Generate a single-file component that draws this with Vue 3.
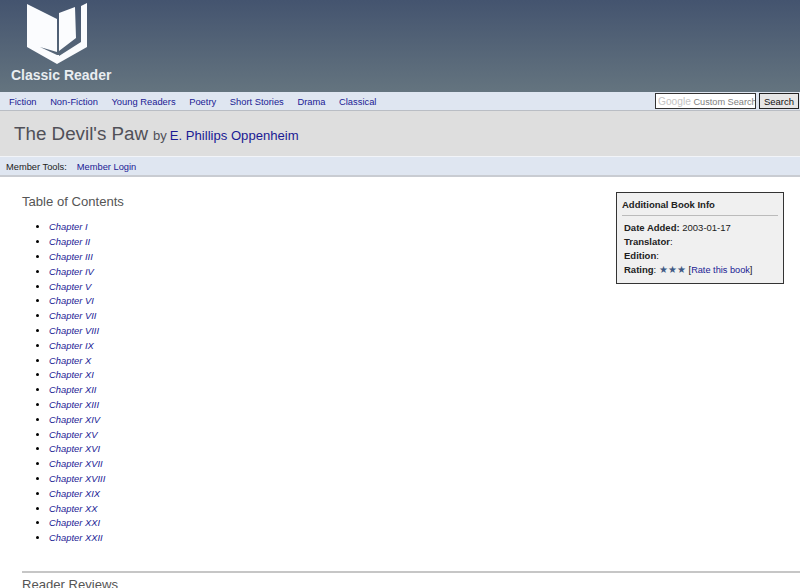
<script setup>
const numerals = ['I','II','III','IV','V','VI','VII','VIII','IX','X','XI','XII','XIII','XIV','XV','XVI','XVII','XVIII','XIX','XX','XXI','XXII']
const chapters = numerals.map(n => 'Chapter ' + n)
const navItems = ['Fiction','Non-Fiction','Young Readers','Poetry','Short Stories','Drama','Classical']
</script>

<template>
  <div class="page">
    <header class="banner">
      <div class="logo">
        <svg class="logo-mark" width="62" height="64" viewBox="0 0 62 64">
          <path d="M1 4 L31 19 L31 52 L14 47 L31 55 L33 55 L33 13 L49 7 L50 38 L33 51 L33 56 L55 42 L55 6 L61 3 L61 47 L31 64 L1 47 Z" fill="#fbfcfe"/>
        </svg>
        <div class="logo-text">Classic Reader</div>
      </div>
    </header>

    <nav class="nav">
      <div class="nav-links">
        <a v-for="item in navItems" :key="item" href="#">{{ item }}</a>
      </div>
      <form class="search" @submit.prevent>
        <div class="search-input"><span class="g">Google</span> Custom Search</div>
        <button class="search-btn" type="submit">Search</button>
      </form>
    </nav>

    <div class="title-band">
      <h1>The Devil's Paw</h1>
      <span class="by">by</span>
      <a href="#" class="author">E. Phillips Oppenheim</a>
    </div>

    <div class="tools">
      <span>Member Tools:</span>
      <a href="#">Member Login</a>
    </div>

    <main class="content">
      <aside class="info">
        <h3>Additional Book Info</h3>
        <dl>
          <div><b>Date Added:</b> 2003-01-17</div>
          <div><b>Translator</b>:</div>
          <div><b>Edition</b>:</div>
          <div><b>Rating</b>: <span class="stars">★★★</span> [<a href="#">Rate this book</a>]</div>
        </dl>
      </aside>
      <h2 class="toc-title">Table of Contents</h2>
      <ul class="toc">
        <li v-for="c in chapters" :key="c"><a href="#">{{ c }}</a></li>
      </ul>
      <hr class="rule" />
      <h2 class="reviews">Reader Reviews</h2>
    </main>
  </div>
</template>

<style>
html, body { margin: 0; background: #fff; overflow: hidden; }
</style>

<style scoped>
.page { width: 800px; height: 588px; overflow: hidden; font-family: "Liberation Sans", Arial, sans-serif; color: #222; }
a { text-decoration: none; color: #1a1a94; }
.banner { height: 92px; background: linear-gradient(#44546f, #64747f); box-sizing: border-box; padding: 0 0 0 11px; }
.logo { width: 110px; }
.logo-mark { display: block; margin-left: 15px; }
.logo-text { font-size: 14px; font-weight: bold; color: #e9edf1; margin-top: 3px; line-height: 16px; white-space: nowrap; }
.nav { height: 19px; box-sizing: border-box; background: #dfe6f1; border-bottom: 1px solid #b9bdc4; display: flex; justify-content: space-between; align-items: center; padding: 1px 1px 0 9px; }
.nav-links { display: flex; gap: 13.6px; font-size: 9.35px; }
.search { display: flex; gap: 3px; margin-top: -1px; }
.search-input { width: 101px; height: 16px; box-sizing: border-box; border: 1px solid #333; background: #fff; font-size: 9.2px; line-height: 15px; padding-left: 2px; color: #808080; white-space: nowrap; overflow: hidden; }
.g { color: #c4c4c4; font-size: 10.2px; }
.search-btn { width: 40px; height: 16px; box-sizing: border-box; padding: 0; border: 1px solid #222; background: #e6e6e6; font: 9.5px "Liberation Sans", Arial, sans-serif; color: #111; }
.title-band { height: 46px; box-sizing: border-box; background: #dedede; border-bottom: 1px solid #f2f4f8; display: flex; align-items: baseline; padding: 11px 0 0 14px; }
.title-band h1 { margin: 0; font-size: 18.8px; font-weight: normal; color: #505058; line-height: 24px; }
.by { font-size: 13px; color: #505058; margin-left: 5px; }
.author { font-size: 13.1px; margin-left: 3px; }
.tools { height: 20px; box-sizing: border-box; background: #dfe6f1; border-bottom: 2px solid #c9ccd2; display: flex; align-items: center; gap: 10px; padding: 1px 0 0 6px; font-size: 9.3px; color: #222; }
.content { padding: 16px 0 0 22px; }
.info { float: right; width: 168px; height: 92px; box-sizing: border-box; margin: -1px 16px 0 0; border: 1px solid #333; background: #f0f0f0; padding: 5px 5px 0; font-size: 9.5px; }
.info h3 { margin: 0; font-size: 9.5px; line-height: 14px; padding-bottom: 3px; border-bottom: 1px solid #bbb; font-weight: bold; color: #222; }
.info dl { margin: 5px 0 0 2px; }
.info dl div { line-height: 14px; white-space: nowrap; }
.stars { color: #3f5a85; font-size: 9.6px; }
.info a { font-size: 9.2px; }
.toc-title { margin: 0; font-size: 13.1px; font-weight: normal; color: #555; line-height: 18px; }
.toc { margin: 9.4px 0 0; padding: 0 0 0 27px; font-size: 9.4px; font-style: italic; width: 200px; color: #000; }
.toc li { height: 14.8px; line-height: 14.8px; }
.rule { margin: 24.6px 0 0; width: 778px; height: 2px; border: 0; background: #c6c6c6; }
.reviews { margin: 3px 0 0; font-size: 13.1px; font-weight: normal; color: #555; line-height: 18px; }
</style>
